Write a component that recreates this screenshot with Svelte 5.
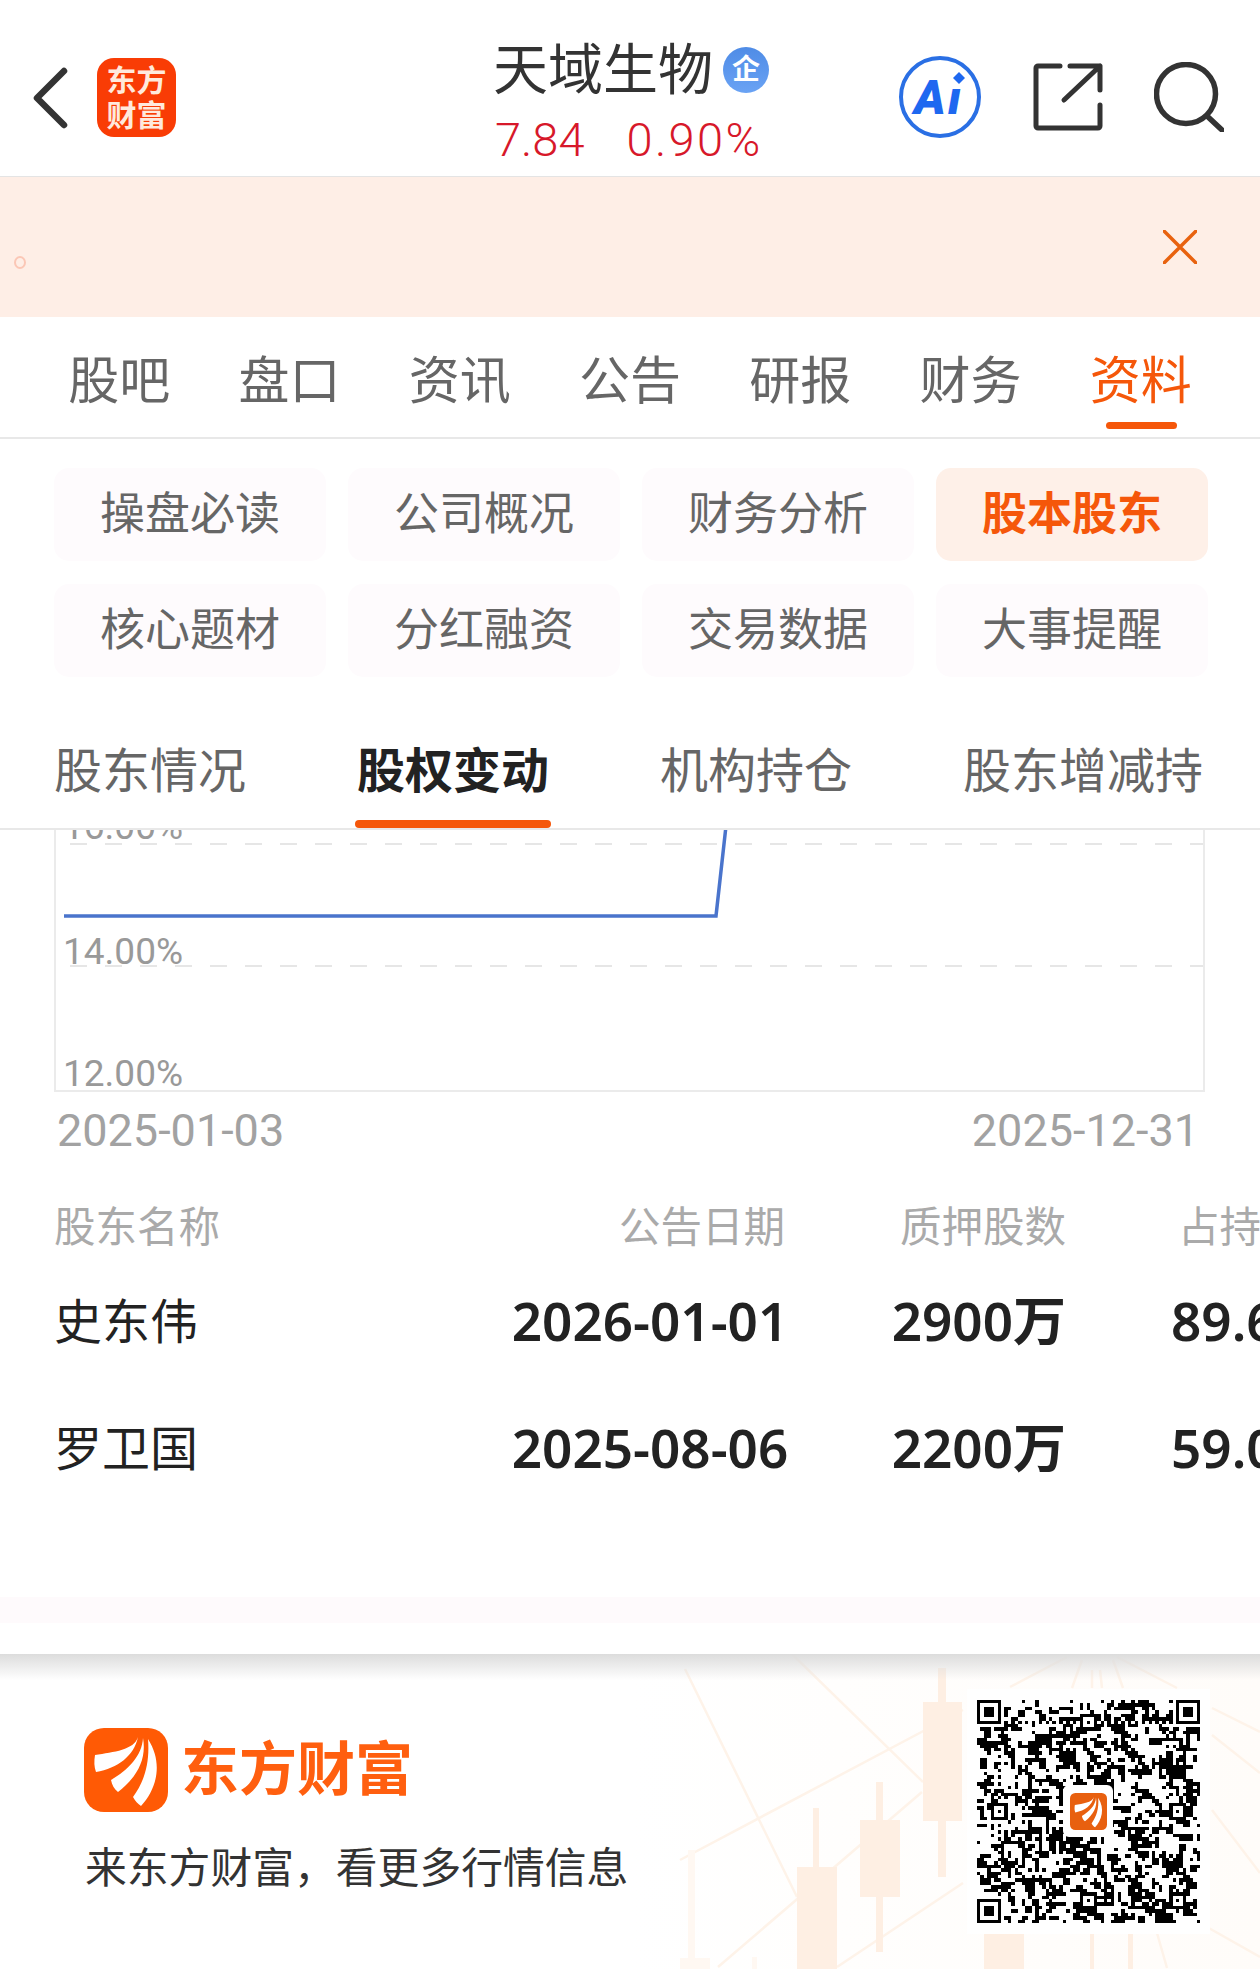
<script>
	const mainTabs = ['股吧', '盘口', '资讯', '公告', '研报', '财务', '资料'];
	const chips = ['操盘必读', '公司概况', '财务分析', '股本股东', '核心题材', '分红融资', '交易数据', '大事提醒'];
	const subTabs = ['股东情况', '股权变动', '机构持仓', '股东增减持'];
	const rows = [
		{ name: '史东伟', date: '2026-01-01', shares: '2900万', pct: '89.66%' },
		{ name: '罗卫国', date: '2025-08-06', shares: '2200万', pct: '59.03%' }
	];

	// QR look-alike: version 12 grid, 65 modules
	const size = 65;
	function buildQr() {
		let seed = 20260101;
		const rnd = () => {
			seed = (seed * 1664525 + 1013904223) >>> 0;
			return seed / 4294967296;
		};
		const grid = [];
		for (let y = 0; y < size; y++) {
			grid[y] = [];
			for (let x = 0; x < size; x++) {
				const left = x > 0 ? grid[y][x - 1] : 0;
				const up = y > 0 ? grid[y - 1][x] : 0;
				grid[y][x] = rnd() < 0.22 + (left ? 0.26 : 0) + (up ? 0.26 : 0) ? 1 : 0;
			}
		}
		const clear = (x0, y0, w, h) => {
			for (let y = y0; y < y0 + h; y++)
				for (let x = x0; x < x0 + w; x++) if (grid[y] && x >= 0 && x < size) grid[y][x] = 0;
		};
		const finder = (x0, y0) => {
			clear(x0 - 1, y0 - 1, 9, 9);
			for (let y = 0; y < 7; y++)
				for (let x = 0; x < 7; x++) {
					const ring = x === 0 || y === 0 || x === 6 || y === 6;
					const core = x > 1 && x < 5 && y > 1 && y < 5;
					grid[y0 + y][x0 + x] = ring || core ? 1 : 0;
				}
		};
		const align = (cx, cy) => {
			for (let y = -2; y <= 2; y++)
				for (let x = -2; x <= 2; x++)
					grid[cy + y][cx + x] = Math.max(Math.abs(x), Math.abs(y)) !== 1 ? 1 : 0;
		};
		[
			[6, 32], [32, 6], [32, 32], [58, 32], [32, 58], [58, 58]
		].forEach(([x, y]) => align(x, y));
		finder(0, 0);
		finder(58, 0);
		finder(0, 58);
		for (let i = 8; i < 57; i++) {
			if (Math.abs(i - 32) > 2) {
				grid[6][i] = i % 2 === 0 ? 1 : 0;
				grid[i][6] = i % 2 === 0 ? 1 : 0;
			}
		}
		let d = '';
		for (let y = 0; y < size; y++)
			for (let x = 0; x < size; x++) if (grid[y][x]) d += `M${x} ${y}h1v1h-1z`;
		return d;
	}
	const qrPath = buildQr();
</script>

{#snippet fan()}
	<path d="M54 9C50 22 30 24 11 27 10 33 10 39 12 44 34 40 50 28 54 9Z" />
	<path d="M59 10C58 28 44 42 27 52 28 57 30 61 34 64 52 50 63 32 59 10Z" />
	<path d="M64 11C66 36 60 54 49 69 51 73 54 76 57 78 72 62 80 36 64 11Z" />
{/snippet}

<div class="page">
	<header class="top">
		<svg class="back" viewBox="0 0 36 62"><path d="M32 4 5 31l27 27" /></svg>
		<div class="app-badge"><span>东方</span><span>财富</span></div>
		<div class="stock">
			<div class="stock-name">
				<span>天域生物</span>
				<span class="qi">企</span>
			</div>
			<div class="stock-price"><span>7.84</span><span class="pct">0.90%</span></div>
		</div>
		<svg class="ai" viewBox="0 0 84 84">
			<circle cx="42" cy="42" r="39" />
			<text x="16" y="59">Aı</text>
			<path class="spark" d="M61 17l6 6-6 6-6-6z" />
		</svg>
		<svg class="share" viewBox="0 0 68 68">
			<path d="M27 3H5a2 2 0 0 0-2 2v58a2 2 0 0 0 2 2h60a2 2 0 0 0 2-2V42" />
			<path d="M37 3H67V27M67 3 31 37" />
		</svg>
		<svg class="search" viewBox="0 0 70 70">
			<circle cx="32" cy="32" r="29.5" />
			<path d="M53 54 68 68" />
		</svg>
	</header>

	<div class="notice">
		<span class="dot"></span>
		<svg class="close" viewBox="0 0 34 34"><path d="M1 1l32 32M33 1 1 33" /></svg>
	</div>

	<nav class="main-tabs">
		{#each mainTabs as tab, i}
			<div class="main-tab" class:on={i === 6}>{tab}</div>
		{/each}
	</nav>

	<div class="chips">
		{#each chips as chip, i}
			<div class="chip" class:on={i === 3}>{chip}</div>
		{/each}
	</div>

	<div class="sub-tabs">
		{#each subTabs as tab, i}
			<div class="sub-tab" class:on={i === 1}>{tab}</div>
		{/each}
	</div>

	<section class="scroll">
		<div class="chart">
			<div class="plot">
				<div class="grid-row r16"><span>16.00%</span></div>
				<div class="grid-row r14"><span>14.00%</span></div>
				<div class="grid-row r12"><span>12.00%</span></div>
				<svg class="series" viewBox="0 0 1150 262">
					<polyline points="8,86 660,86 670,-4" />
				</svg>
			</div>
			<div class="dates"><span>2025-01-03</span><span>2025-12-31</span></div>
		</div>

		<div class="table">
			<div class="thead">
				<span class="c-name">股东名称</span>
				<span class="c-date">公告日期</span>
				<span class="c-shares">质押股数</span>
				<span class="c-pct">占持股比</span>
			</div>
			{#each rows as row}
				<div class="trow">
					<span class="c-name">{row.name}</span>
					<span class="c-date">{row.date}</span>
					<span class="c-shares">{row.shares}</span>
					<span class="c-pct">{row.pct}</span>
				</div>
			{/each}
		</div>
		<div class="tint"></div>
	</section>

	<footer class="foot">
		<svg class="decor" viewBox="0 0 1260 315" preserveAspectRatio="none">
			<g class="rays">
				<path d="M792 0 923 128M685 15 797 243M680 206 963 56M718 313 922 138M837 313 963 229" />
				<path d="M1067 3 1010 33M1082 6 1072 34M1092 16 1092 34M1100 16 1102 34M1113 6 1123 34M1117 3 1177 34" />
				<path d="M1212 54 1260 78M1212 81 1260 119M1212 156 1260 219M1157 279 1167 314M1207 273 1260 303" />
			</g>
			<g class="candles">
				<rect class="faint" x="688" y="196" width="7" height="119" />
				<rect class="faint" x="680" y="304" width="30" height="11" />
				<rect class="faint" x="752" y="303" width="5" height="12" />
				<rect x="813" y="154" width="6" height="161" />
				<rect x="797" y="213" width="40" height="102" />
				<rect x="876" y="128" width="7" height="170" />
				<rect x="860" y="166" width="40" height="77" />
				<rect x="938" y="14" width="8" height="209" />
				<rect x="923" y="48" width="39" height="119" />
				<rect x="984" y="279" width="40" height="36" />
				<rect x="1090" y="279" width="4" height="36" />
				<rect x="1128" y="279" width="5" height="36" />
			</g>
		</svg>
		<div class="brand">
			<div class="brand-top">
				<svg class="fan-logo" viewBox="0 0 84 84">
					<rect width="84" height="84" rx="20" />
					{@render fan()}
				</svg>
				<span class="brand-name">东方财富</span>
			</div>
			<p class="slogan">来东方财富，看更多行情信息</p>
		</div>
		<div class="qr">
			<svg class="qr-code" viewBox="0 0 65 65" shape-rendering="crispEdges"><path d={qrPath} /></svg>
			<div class="qr-mid">
				<svg class="fan-small" viewBox="0 0 84 84">
					<rect width="84" height="84" rx="12" />
					{@render fan()}
				</svg>
			</div>
		</div>
	</footer>
</div>

<style>
	:global(body) {
		margin: 0;
		background: #fff;
	}

	.page {
		width: 1260px;
		height: 1969px;
		overflow: hidden;
		display: flex;
		flex-direction: column;
		font-family: Roboto, 'Noto Sans CJK SC', sans-serif;
		color: #666;
	}

	.top {
		height: 176px;
		border-bottom: 1px solid #e4e4e4;
		display: flex;
		align-items: flex-start;
		flex: none;
	}

	.back {
		width: 36px;
		height: 62px;
		margin: 67px 0 0 32px;
		fill: none;
		stroke: #333;
		stroke-width: 6.5;
		stroke-linecap: round;
		stroke-linejoin: round;
	}

	.app-badge {
		width: 79px;
		height: 79px;
		margin: 58px 0 0 29px;
		border-radius: 17px;
		background: #f93c05;
		color: #ffe9dc;
		font-size: 30px;
		font-weight: 700;
		line-height: 35px;
		display: flex;
		flex-direction: column;
		align-items: center;
		justify-content: center;
	}

	.stock {
		margin: 38px 0 0 318px;
		width: 407px;
	}

	.stock-name {
		display: flex;
		align-items: center;
		height: 64px;
		font-size: 55px;
		color: #333;
		line-height: 64px;
		margin-left: -1px;
	}

	.qi {
		width: 46px;
		height: 46px;
		margin: -1px 0 0 10px;
		border-radius: 50%;
		background: linear-gradient(#4f8ce6, #6aa3f4);
		color: #fff;
		font-size: 28px;
		font-weight: 700;
		line-height: 46px;
		text-align: center;
	}

	.stock-price {
		display: flex;
		gap: 42px;
		margin-top: 15px;
		font-size: 47px;
		font-weight: 300;
		line-height: 46px;
		color: #d7182a;
		margin-left: 1px;
	}

	.pct {
		letter-spacing: 2.4px;
	}

	.ai {
		width: 84px;
		height: 84px;
		margin: 55px 0 0 -3px;
		flex: none;
	}

	.ai circle {
		fill: none;
		stroke: #2a6fe4;
		stroke-width: 4;
	}

	.ai text {
		font-family: Roboto, sans-serif;
		font-size: 48px;
		font-weight: 900;
		font-style: italic;
		letter-spacing: 2px;
		fill: #1e68f0;
	}

	.spark {
		fill: #1e68f0;
	}

	.share {
		width: 68px;
		height: 68px;
		margin: 63px 0 0 51px;
		flex: none;
		fill: none;
		stroke: #333;
		stroke-width: 5;
		stroke-linecap: round;
		stroke-linejoin: round;
		overflow: visible;
	}

	.search {
		width: 70px;
		height: 70px;
		margin: 62px 0 0 53px;
		flex: none;
		fill: none;
		stroke: #333;
		stroke-width: 5.5;
		stroke-linecap: round;
	}

	.notice {
		position: relative;
		height: 140px;
		flex: none;
		background: #feeee6;
	}

	.dot {
		position: absolute;
		left: 14px;
		top: 79px;
		width: 8px;
		height: 9px;
		border: 2px solid #fbc7b6;
		border-radius: 50%;
	}

	.close {
		position: absolute;
		left: 1163px;
		top: 53px;
		width: 34px;
		height: 34px;
		fill: none;
		stroke: #e8620f;
		stroke-width: 3.5;
		stroke-linecap: round;
	}

	.main-tabs {
		height: 122px;
		flex: none;
		box-sizing: border-box;
		padding: 0 34px;
		border-bottom: 2px solid #e8e8e8;
		display: grid;
		grid-template-columns: repeat(7, 1fr);
	}

	.main-tab {
		position: relative;
		font-size: 51px;
		line-height: 130px;
		height: 120px;
		text-align: center;
		color: #666;
	}

	.main-tab.on {
		color: #f5570a;
	}

	.main-tab.on::after {
		content: '';
		position: absolute;
		left: 50%;
		bottom: 8px;
		width: 71px;
		height: 7px;
		margin-left: -35px;
		border-radius: 4px;
		background: #f5570a;
	}

	.chips {
		flex: none;
		padding: 29px 52px 0 54px;
		display: grid;
		grid-template-columns: repeat(4, 272px);
		grid-auto-rows: 93px;
		column-gap: 22px;
		row-gap: 23px;
	}

	.chip {
		border-radius: 15px;
		background: #fefbfd;
		font-size: 45px;
		line-height: 93px;
		text-align: center;
	}

	.chip.on {
		background: #fef0e8;
		color: #f5570a;
		font-weight: 700;
	}

	.sub-tabs {
		flex: none;
		height: 153px;
		box-sizing: border-box;
		padding: 58px 0 0 54px;
		border-bottom: 2px solid #e8e8e8;
		display: flex;
		gap: 111px;
	}

	.sub-tab {
		position: relative;
		font-size: 48px;
		line-height: 74px;
		height: 72px;
		white-space: nowrap;
	}

	.sub-tab.on {
		color: #222;
		font-weight: 700;
	}

	.sub-tab.on::after {
		content: '';
		position: absolute;
		left: -2px;
		right: -2px;
		bottom: -21px;
		height: 8px;
		border-radius: 4px;
		background: #f5570a;
	}

	.scroll {
		flex: none;
		height: 793px;
		overflow: hidden;
		position: relative;
	}

	.chart {
		padding: 0 55px 0 54px;
	}

	.plot {
		position: relative;
		height: 262px;
		box-sizing: border-box;
		border-left: 2px solid #ebebeb;
		border-right: 2px solid #ebebeb;
		border-bottom: 2px solid #ebebeb;
	}

	.grid-row {
		position: absolute;
		left: 7px;
		right: 0;
		height: 36px;
		font-size: 37px;
		line-height: 36px;
		color: #999;
	}

	.grid-row::after {
		content: '';
		position: absolute;
		left: 7px;
		right: 0;
		bottom: -2px;
		height: 2px;
		background: repeating-linear-gradient(90deg, #e6e6e6 0 17px, transparent 17px 35px);
	}

	.r16 {
		top: -26px;
		height: 39px;
	}

	.r14 {
		top: 99px;
	}

	.r12 {
		top: 221px;
	}

	.r12::after {
		display: none;
	}

	.grid-row span {
		position: relative;
		top: 5px;
	}

	.series {
		position: absolute;
		left: 0;
		top: 0;
		width: 1150px;
		height: 262px;
		overflow: hidden;
		fill: none;
		stroke: #4a74cc;
		stroke-width: 3.5;
	}

	.dates {
		display: flex;
		justify-content: space-between;
		padding: 9px 6px 0 3px;
		font-size: 45px;
		line-height: 60px;
		color: #a2a2a2;
	}

	.table {
		margin-top: 38px;
	}

	.thead,
	.trow {
		position: relative;
		white-space: nowrap;
	}

	.thead {
		height: 58px;
		font-size: 41.5px;
		line-height: 58px;
		color: #aaa;
	}

	.trow {
		height: 127px;
		line-height: 127px;
		font-family: 'Noto Sans', 'Noto Sans CJK SC', sans-serif;
		font-size: 53px;
		font-weight: 600;
		color: #222;
	}

	.thead span,
	.trow span {
		position: absolute;
		top: 0;
	}

	.c-name {
		left: 54px;
	}

	.trow .c-name {
		top: -2px;
		font-family: 'Noto Sans CJK SC', sans-serif;
		font-size: 48px;
		font-weight: 400;
	}

	.c-date {
		right: 475px;
	}

	.trow .c-date {
		right: auto;
		left: 650px;
		transform: translateX(-50%);
	}

	.c-shares {
		right: 194px;
	}

	.c-pct {
		left: 1178px;
	}

	.trow .c-pct {
		left: 1171px;
	}

	.tint {
		position: absolute;
		left: 0;
		right: 0;
		bottom: 0;
		height: 26px;
		background: #fefafc;
	}

	.foot {
		position: relative;
		flex: 1;
		margin-top: 31px;
		background: linear-gradient(90deg, #fff 50%, #fffcf9);
		display: flex;
		justify-content: space-between;
	}

	.foot::before {
		content: '';
		position: absolute;
		left: 0;
		right: 0;
		top: 0;
		height: 26px;
		background: linear-gradient(#dcdcdc, rgba(255, 255, 255, 0));
		z-index: 2;
	}

	.decor {
		position: absolute;
		inset: 0;
		width: 100%;
		height: 100%;
	}

	.rays {
		fill: none;
		stroke: #fef3e9;
		stroke-width: 2.5;
	}

	.candles rect {
		fill: #feefe3;
	}

	.candles .faint {
		fill: #fff8f2;
	}

	.brand {
		position: relative;
		margin: 74px 0 0 84px;
	}

	.brand-top {
		display: flex;
		align-items: center;
		gap: 13px;
	}

	.fan-logo {
		width: 84px;
		height: 84px;
		fill: #fff;
	}

	.fan-logo rect {
		fill: #ff5a05;
	}

	.brand-name {
		font-size: 58px;
		font-weight: 700;
		color: #ff5f0f;
		line-height: 84px;
	}

	.slogan {
		margin: 27px 0 0 1px;
		font-size: 41.8px;
		line-height: 60px;
		color: #333;
		white-space: nowrap;
	}

	.qr {
		position: relative;
		width: 243px;
		height: 245px;
		margin: 35px 50px 0 0;
		background: #fff;
	}

	.qr-code {
		position: absolute;
		left: 10px;
		top: 11px;
		width: 223px;
		height: 223px;
		fill: #000;
	}

	.qr-mid {
		position: absolute;
		left: 96px;
		top: 96px;
		width: 50px;
		height: 52px;
		background: #fff;
		border-radius: 6px;
		display: flex;
		align-items: center;
		justify-content: center;
	}

	.fan-small {
		width: 37px;
		height: 37px;
		fill: #fff;
	}

	.fan-small rect {
		fill: #e8600f;
	}
</style>
